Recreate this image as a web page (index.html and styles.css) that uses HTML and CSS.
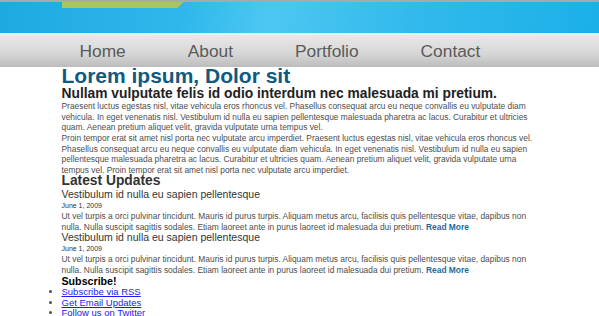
FILE: index.html
```html
<!DOCTYPE html>
<html lang="en">
<head>
  <meta charset="UTF-8">
  <meta name="viewport" content="width=device-width, initial-scale=1.0">
  <title>Lorem ipsum, Dolor sit</title>
  <link rel="stylesheet" href="styles.css">
</head>
<body>
  <!-- header band -->
  <div class="header">
    <div class="wrap">
      <div class="tab"></div>
    </div>
  </div>
  <!-- navigation -->
  <div class="nav">
    <ul class="wrap">
      <li><a href="#">Home</a></li>
      <li><a href="#">About</a></li>
      <li><a href="#">Portfolio</a></li>
      <li><a href="#">Contact</a></li>
    </ul>
  </div>
  <!-- content -->
  <div class="wrap content">
    <h1 class="title">Lorem ipsum, Dolor sit</h1>
    <h2 class="subtitle">Nullam vulputate felis id odio interdum nec malesuada mi pretium.</h2>
    <p>Praesent luctus egestas nisl, vitae vehicula eros rhoncus vel. Phasellus consequat arcu eu neque convallis eu vulputate diam vehicula. In eget venenatis nisl. Vestibulum id nulla eu sapien pellentesque malesuada pharetra ac lacus. Curabitur et ultricies quam. Aenean pretium aliquet velit, gravida vulputate urna tempus vel.</p>
    <p>Proin tempor erat sit amet nisl porta nec vulputate arcu imperdiet. Praesent luctus egestas nisl, vitae vehicula eros rhoncus vel. Phasellus consequat arcu eu neque convallis eu vulputate diam vehicula. In eget venenatis nisl. Vestibulum id nulla eu sapien pellentesque malesuada pharetra ac lacus. Curabitur et ultricies quam. Aenean pretium aliquet velit, gravida vulputate urna tempus vel. Proin tempor erat sit amet nisl porta nec vulputate arcu imperdiet.</p>

    <h3 class="updates">Latest Updates</h3>
    <div class="post">
      <h4>Vestibulum id nulla eu sapien pellentesque</h4>
      <div class="date">June 1, 2009</div>
      <p>Ut vel turpis a orci pulvinar tincidunt. Mauris id purus turpis. Aliquam metus arcu, facilisis quis pellentesque vitae, dapibus non nulla. Nulla suscipit sagittis sodales. Etiam laoreet ante in purus laoreet id malesuada dui pretium. <a class="more" href="#">Read More</a></p>
    </div>
    <div class="post">
      <h4>Vestibulum id nulla eu sapien pellentesque</h4>
      <div class="date">June 1, 2009</div>
      <p>Ut vel turpis a orci pulvinar tincidunt. Mauris id purus turpis. Aliquam metus arcu, facilisis quis pellentesque vitae, dapibus non nulla. Nulla suscipit sagittis sodales. Etiam laoreet ante in purus laoreet id malesuada dui pretium. <a class="more" href="#">Read More</a></p>
    </div>

    <h3 class="subscribe">Subscribe!</h3>
    <ul class="links">
      <li><a href="#">Subscribe via RSS</a></li>
      <li><a href="#">Get Email Updates</a></li>
      <li><a href="#">Follow us on Twitter</a></li>
    </ul>
  </div>
</body>
</html>
```

FILE: styles.css
```css
/* reset */
* {
  margin: 0;
  padding: 0;
  box-sizing: border-box;
}
body {
  font-family: "Liberation Sans", Arial, sans-serif;
  line-height: 10.67px;
  color: #4d4d4d;
  background-color: #fff;
}
.wrap {
  width: 476px;
  margin: 0 auto;
}
/* header band */
.header {
  height: 35px;
  border-top: 2px solid #a9a9a9;
  border-bottom: 2px solid #e3f3fb;
  background: linear-gradient(100deg, #1fa9e2 0%, #2db7ea 30%, #4dc7f1 45%, #31b9ec 70%, #1bb0e8 100%);
}
.header .tab {
  width: 122px;
  height: 6px;
  background-color: #a9c756;
  clip-path: polygon(0 0, 100% 0, 95% 100%, 0 100%);
}
/* navigation */
.nav {
  height: 32px;
  background: linear-gradient(#e8e8e8, #d6d6d6 60%, #bcbcbc);
}
.nav ul {
  display: flex;
  gap: 62px;
  padding-left: 18px;
  list-style: none;
}
.nav a {
  display: block;
  line-height: 32px;
  font-size: 17.33px;
  color: #5a5a5a;
  text-decoration: none;
}
/* content */
.content p {
  font-size: 8.4px;
}
.title {
  margin-top: 1px;
  line-height: 16px;
  font-size: 21px;
  color: #0f5a7e;
}
.subtitle {
  margin-top: 3px;
  line-height: 14px;
  font-size: 13.8px;
  color: #222;
}
.updates {
  margin-bottom: 2.6px;
  font-size: 13.8px;
  color: #333;
}
.post h4 {
  font-size: 10.5px;
  font-weight: normal;
  color: #333;
}
.post .date {
  line-height: 11.33px;
  font-size: 7px;
  color: #333;
}
.more {
  font-weight: bold;
  color: #1a6b9a;
  text-decoration: none;
}
.subscribe {
  margin-top: 0.8px;
  font-size: 10.67px;
  color: #000;
}
.links {
  padding-left: 0;
  font-size: 9.5px;
  list-style: disc outside;
}
.links a {
  color: #1c1cee;
}
```
